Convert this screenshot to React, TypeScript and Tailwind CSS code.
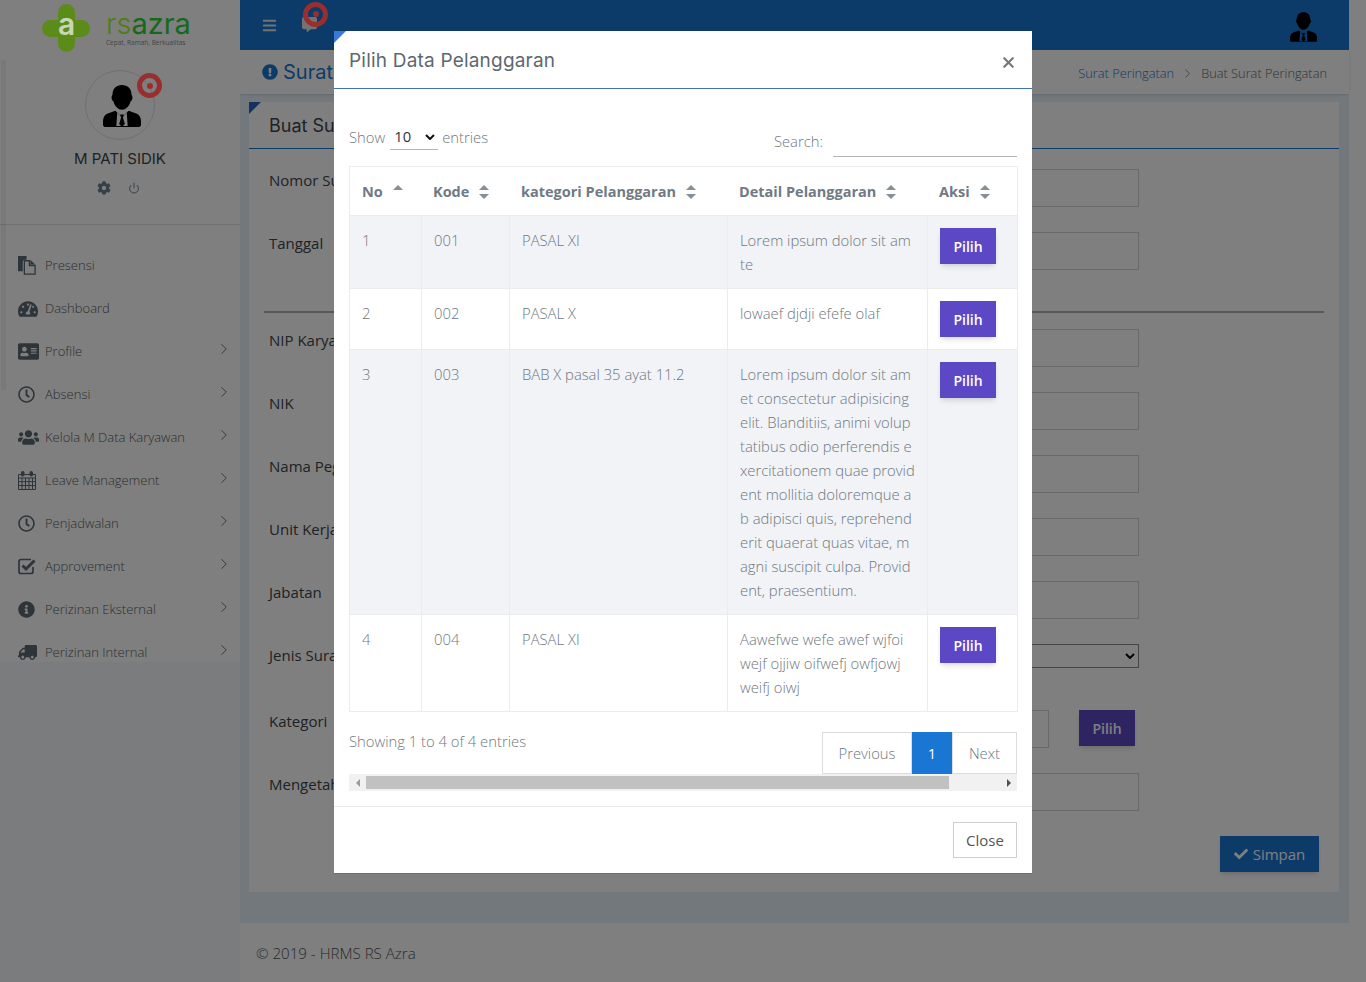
import { ChevronRight, Power, X } from 'lucide-react'
import {
  FaAddressCard,
  FaBars,
  FaCheck,
  FaCog,
  FaCommentAlt,
  FaExclamationCircle,
  FaInfoCircle,
  FaRegClock,
  FaTachometerAlt,
  FaTruck,
  FaUsers,
} from 'react-icons/fa'
import type { ReactNode } from 'react'

const body = { fontFamily: '"Open Sans", sans-serif' }
const heading = { fontFamily: 'Inter, sans-serif' }

function UserTie({ className, bg }: { className: string; bg: string }) {
  return (
    <svg viewBox="0 0 40 44" className={className} fill="currentColor">
      <path d="M20 0c-6 0-10 4-10 10 0 1-1 1-1 3s1 4 2 4c1 5 5 9 9 9s8-4 9-9c1 0 2-2 2-4s-1-2-1-3c0-6-4-10-10-10z" />
      <path d="M13 27l-8 3c-3 1-5 4-5 8v4c0 1 1 2 2 2h36c1 0 2-1 2-2v-4c0-4-2-7-5-8l-8-3-5 5h-4z" />
      <path d="M15 29l5 5 5-5 1 14H14z" fill={bg} />
      <path d="M18 31h4l-1 3 2 7-3 3-3-3 2-7z" />
    </svg>
  )
}

function FilesIcon() {
  return (
    <svg viewBox="0 0 20 20" className="h-[19px] w-[19px]" fill="currentColor">
      <path d="M0 0h9v4H6.5L5 5.5V16H0z" />
      <path d="M6.7 5H12v5h6v9H6.7z" fill="none" stroke="currentColor" strokeWidth="1.4" />
      <path d="M13 4l5 5h-5z" />
    </svg>
  )
}

function CalendarIcon() {
  return (
    <svg viewBox="0 0 18 19" className="h-[19px] w-[18px]" fill="none" stroke="currentColor" strokeWidth="1">
      <path d="M.5 3.5h17v15H.5zM.5 7h17M.5 10.7h17M.5 14.5h17M4 7v11.5M7.5 7v11.5M11 7v11.5M14.5 7v11.5" />
      <rect x="3.5" y="0.5" width="2.5" height="4.5" rx="1" fill="currentColor" />
      <rect x="12" y="0.5" width="2.5" height="4.5" rx="1" fill="currentColor" />
    </svg>
  )
}

function CheckIcon() {
  return (
    <svg viewBox="0 0 18 17" className="h-[17px] w-[18px]" fill="none" stroke="currentColor">
      <path d="M15 9v4.5a2 2 0 0 1-2 2H3a2 2 0 0 1-2-2v-10a2 2 0 0 1 2-2h10" strokeWidth="1.7" />
      <path d="M4.5 7.5L8 11l8.5-8.5" strokeWidth="3" />
    </svg>
  )
}

function Ring({ className }: { className: string }) {
  return (
    <span className={`absolute z-50 flex h-[25px] w-[25px] items-center justify-center rounded-full border-[5px] border-[#982f2e] ${className}`}>
      <span className="h-[6px] w-[6px] rounded-full bg-[#982f2e]" />
    </span>
  )
}

function SortIcon({ only }: { only?: boolean }) {
  return (
    <svg viewBox="0 0 10 14" className="h-[14px] w-[10px]" fill="#868e96">
      <path d="M5 0l5 5H0z" />
      {!only && <path d="M5 14L0 9h10z" />}
    </svg>
  )
}

const menu: { label: string; icon: ReactNode; arrow: boolean }[] = [
  { label: 'Presensi', icon: <FilesIcon />, arrow: false },
  { label: 'Dashboard', icon: <FaTachometerAlt size={20} />, arrow: false },
  { label: 'Profile', icon: <FaAddressCard size={21} />, arrow: true },
  { label: 'Absensi', icon: <FaRegClock size={17} />, arrow: true },
  { label: 'Kelola M Data Karyawan', icon: <FaUsers size={21} />, arrow: true },
  { label: 'Leave Management', icon: <CalendarIcon />, arrow: true },
  { label: 'Penjadwalan', icon: <FaRegClock size={17} />, arrow: true },
  { label: 'Approvement', icon: <CheckIcon />, arrow: true },
  { label: 'Perizinan Eksternal', icon: <FaInfoCircle size={17} />, arrow: true },
  { label: 'Perizinan Internal', icon: <FaTruck size={19} className="-scale-x-100" />, arrow: true },
]

const rows = [
  { no: '1', kode: '001', kategori: 'PASAL XI', detail: ['Lorem ipsum dolor sit am', 'te'], h: 'h-[73px]', striped: true },
  { no: '2', kode: '002', kategori: 'PASAL X', detail: ['lowaef djdji efefe olaf'], h: 'h-[61px]', striped: false },
  {
    no: '3',
    kode: '003',
    kategori: 'BAB X pasal 35 ayat 11.2',
    detail: [
      'Lorem ipsum dolor sit am',
      'et consectetur adipisicing',
      'elit. Blanditiis, animi volup',
      'tatibus odio perferendis e',
      'xercitationem quae provid',
      'ent mollitia doloremque a',
      'b adipisci quis, reprehend',
      'erit quaerat quas vitae, m',
      'agni suscipit culpa. Provid',
      'ent, praesentium.',
    ],
    h: 'h-[265px]',
    striped: true,
  },
  { no: '4', kode: '004', kategori: 'PASAL XI', detail: ['Aawefwe wefe awef wjfoi', 'wejf ojjiw oifwefj owfjowj', 'weifj oiwj'], h: 'h-[97px]', striped: false },
]

function FormRow({ label, className = 'mb-[25px]' }: { label: string; className?: string }) {
  return (
    <div className={`flex ${className}`}>
      <label className="-mt-[1px] w-[150px] text-[15px] leading-[24px] text-[#3d4448]">{label}</label>
      <div className="h-[38px] w-[720px] border border-[#ced4da] bg-white" />
    </div>
  )
}

export default function App() {
  return (
    <div className="relative flex h-[982px] w-[1366px] overflow-hidden bg-white" style={body}>
      {/* Sidebar */}
      <aside className="relative flex w-[240px] shrink-0 flex-col bg-[#f6f9fb]">
        <div className="bg-white">
          <div className="relative z-50 flex h-[60px] items-start pl-[42px] pt-[4px]">
            <svg viewBox="0 0 48 48" className="h-[48px] w-[48px]">
              <rect x="16" y="0" width="17" height="48" rx="8.5" fill="#5b8c1a" />
              <rect x="0" y="16" width="48" height="17" rx="8.5" fill="#5b8c1a" />
            </svg>
            <span className="absolute left-[58px] top-[9px] text-[30px] font-semibold leading-[30px] text-[#c9d6b4]" style={heading}>a</span>
            <div className="ml-[16px] mt-[7px] flex flex-col">
              <div className="flex items-baseline text-[29px] leading-[26px]" style={heading}>
                <span className="font-light text-[#4f7d14]">rs</span>
                <span className="text-[#14691a]">azra</span>
              </div>
              <span className="mt-[2px] whitespace-nowrap text-[6.5px] leading-[7px] text-[#444]">Cepat, Ramah, Berkualitas</span>
            </div>
          </div>
          <div className="flex h-[165px] flex-col items-center border-b border-[#e2e2e2]">
            <div className="relative mt-[10px] flex h-[70px] w-[70px] items-center justify-center rounded-full border border-[#e0e0e0]">
              <UserTie className="ml-[3px] mt-[1px] h-[42px] w-[38px] text-black" bg="#ffffff" />
              <Ring className="left-[51px] top-[2px]" />
            </div>
            <span className="mt-[8px] text-[15px] leading-[22px] text-[#3c4449]" style={heading}>M PATI SIDIK</span>
            <div className="-ml-[3px] mt-[11px] flex items-center gap-[17px] text-[#6c8190]">
              <FaCog size={14} />
              <Power size={12} />
            </div>
          </div>
          <nav className="h-[437px] overflow-hidden pt-[19px]">
            {menu.map((item) => (
              <div key={item.label} className="flex h-[43px] items-center pl-[18px] pr-[7px] text-[13px] font-light text-[#555c61]">
                <span className="flex w-[27px] shrink-0 items-center text-[#5b6a75]">{item.icon}</span>
                <span className="flex-1 whitespace-nowrap">{item.label}</span>
                {item.arrow && <ChevronRight size={18} strokeWidth={1} className="-mt-[5px] text-[#444]" />}
              </div>
            ))}
          </nav>
        </div>
        <div className="absolute left-[1px] top-[60px] h-[330px] w-[5px] bg-black/5" />
      </aside>

      {/* Main */}
      <main className="flex w-[1109px] shrink-0 flex-col bg-[#e5f1f9]">
        <header className="flex h-[50px] shrink-0 items-center justify-between bg-[#1976d2] pl-[22px] pr-[32px]">
          <div className="relative flex items-center gap-[25px] text-[#e7e7e7]">
            <FaBars size={15} />
            <FaCommentAlt size={15} className="-mt-[2px]" />
            <Ring className="left-[41px] -top-[16px]" />
          </div>
          <UserTie className="mt-[3px] h-[30px] w-[27px] text-black" bg="#1976d2" />
        </header>

        <div className="flex h-[44px] shrink-0 items-center justify-between bg-white pl-[22px] pr-[22px] shadow-sm">
          <div className="flex items-center gap-[5px] text-[#1976d2]">
            <FaExclamationCircle size={16} />
            <span className="text-[20px]" style={heading}>Surat Peringatan</span>
          </div>
          <div className="mt-[3px] flex items-center gap-[6px] text-[12.8px] font-light">
            <span className="text-[#1976d2]">Surat Peringatan</span>
            <ChevronRight size={15} strokeWidth={1} className="text-[#555]" />
            <span className="text-[#666]">Buat Surat Peringatan</span>
          </div>
        </div>

        <section className="relative mx-[9px] mt-[8px] flex h-[790px] w-[1090px] shrink-0 flex-col bg-white">
          <div className="absolute left-0 top-0 h-0 w-0 border-r-[12px] border-t-[12px] border-r-transparent border-t-[#2b62c4]" />
          <div className="flex h-[47px] shrink-0 items-center border-b border-[#1976d2] pl-[20px] text-[18px] text-[#3e4549]" style={heading}>
            Buat Surat Peringatan
          </div>
          <div className="px-[20px] pt-[20px]">
            <FormRow label="Nomor Surat" />
            <FormRow label="Tanggal" className="mb-[41px]" />
            <div className="-mx-[5px] mb-[16px] h-[2px] bg-[#b0b0b0]" />
            <FormRow label="NIP Karyawan" />
            <FormRow label="NIK" />
            <FormRow label="Nama Pegawai" />
            <FormRow label="Unit Kerja" />
            <FormRow label="Jabatan" />
            <div className="mb-[42px] flex">
              <label className="-mt-[1px] w-[150px] text-[15px] leading-[24px] text-[#3d4448]">Jenis Surat</label>
              <div className="flex h-[24px] w-[720px] items-center justify-end border border-[#8a8a8a] bg-white pr-[3px]">
                <svg viewBox="0 0 10 6" className="h-[6px] w-[10px]" fill="none" stroke="#000" strokeWidth="2">
                  <path d="M1 1l4 4 4-4" />
                </svg>
              </div>
            </div>
            <div className="mb-[25px] flex">
              <label className="-mt-[1px] w-[150px] text-[15px] leading-[24px] text-[#3d4448]">Kategori</label>
              <div className="h-[38px] w-[630px] border border-[#ced4da] bg-white" />
              <button className="ml-[30px] h-[36px] w-[56px] bg-[#5c48c4] text-[14px] font-semibold text-white shadow-md">Pilih</button>
            </div>
            <FormRow label="Mengetahui" />
            <div className="flex w-[1050px] justify-end">
              <button className="flex h-[36px] w-[99px] items-center justify-center gap-[5px] bg-[#1976d2] text-[15px] text-white shadow-md">
                <FaCheck size={14} />
                Simpan
              </button>
            </div>
          </div>
        </section>

        <div className="h-[31px] shrink-0" />
        <footer className="flex flex-1 items-center bg-white pl-[16px] pt-[2px] text-[15.1px] font-light text-[#555]">© 2019 - HRMS RS Azra</footer>
      </main>

      {/* Backdrop */}
      <div className="absolute inset-0 z-40 bg-black/50" />

      {/* Modal */}
      <div className="absolute left-[334px] top-[31px] z-50 flex h-[843px] w-[698px] flex-col border-b border-[#4472c4] bg-white text-[#6f7780]">
        <div className="absolute left-0 top-0 h-0 w-0 border-r-[12px] border-t-[12px] border-r-transparent border-t-[#3b78d8]" />
        <div className="flex h-[58px] shrink-0 items-center justify-between border-b border-[#3f72b8] pl-[15px] pr-[15px]">
          <span className="mt-[3px] text-[19px] tracking-[0.2px] text-[#5c6870]" style={heading}>Pilih Data Pelanggaran</span>
          <X size={17} strokeWidth={3} className="mt-[6px] text-[#777]" />
        </div>

        <div className="flex flex-col px-[15px]">
          <div className="flex h-[77px] items-start justify-between text-[14.8px] font-light">
            <div className="mt-[35px] flex items-center">
              <span>Show</span>
              <span className="ml-[5px] mr-[4px] flex h-[26px] w-[48px] items-center justify-between border-b border-[#b5b5b5] pl-[4px] pr-[3px] font-normal text-[#333]">
                10
                <svg viewBox="0 0 10 6" className="h-[6px] w-[10px]" fill="none" stroke="#111" strokeWidth="2">
                  <path d="M1 1l4 4 4-4" />
                </svg>
              </span>
              <span>entries</span>
            </div>
            <div className="mt-[36px] flex items-start">
              <span className="mr-[10px] mt-[5px] leading-[22px]">Search:</span>
              <span className="h-[32px] w-[184px] border-b border-[#b5b5b5]" />
            </div>
          </div>

          <table className="w-[668px] table-fixed border border-[#ececec] text-[14.8px] font-light">
            <colgroup>
              <col className="w-[72px]" />
              <col className="w-[88px]" />
              <col className="w-[218px]" />
              <col className="w-[200px]" />
              <col className="w-[90px]" />
            </colgroup>
            <thead>
              <tr className="h-[49px] text-left text-[#6f7a84]">
                {['No', 'Kode', 'kategori Pelanggaran', 'Detail Pelanggaran', 'Aksi'].map((h, i) => (
                  <th key={h} className={`${i === 0 ? 'pl-[12px]' : 'pl-[11.5px]'} pt-[2px] text-[14.5px] font-bold`}>
                    <span className="flex items-center gap-[10px] whitespace-nowrap">
                      {h}
                      <SortIcon only={i === 0} />
                    </span>
                  </th>
                ))}
              </tr>
            </thead>
            <tbody>
              {rows.map((r) => (
                <tr key={r.no} className={`${r.h} ${r.striped ? 'bg-[#f1f3f7]' : 'bg-white'}`}>
                  <td className="border-r border-t border-[#ececec] pl-[12px] pt-[12px] align-top leading-[24px]">{r.no}</td>
                  <td className="border-r border-t border-[#ececec] pl-[12px] pt-[12px] align-top leading-[24px]">{r.kode}</td>
                  <td className="border-r border-t border-[#ececec] pl-[12px] pt-[12px] align-top leading-[24px]">{r.kategori}</td>
                  <td className="border-r border-t border-[#ececec] pl-[12px] pt-[12px] align-top leading-[24px]">
                    {r.detail.map((line) => (
                      <div key={line} className="whitespace-nowrap">{line}</div>
                    ))}
                  </td>
                  <td className="border-t border-[#ececec] pl-[12px] pt-[12px] align-top">
                    <button className="h-[36px] w-[56px] bg-[#5c48c4] text-[14px] font-semibold text-white shadow-md">Pilih</button>
                  </td>
                </tr>
              ))}
            </tbody>
          </table>

          <div className="mt-[20px] flex h-[42px] items-start justify-between">
            <span className="-mt-[3px] text-[14.8px] font-light leading-[24px]">Showing 1 to 4 of 4 entries</span>
            <div className="flex h-[42px] text-[14.8px] font-light">
              <span className="flex w-[90px] items-center justify-center border border-[#dcdcdc]">Previous</span>
              <span className="flex w-[40px] items-center justify-center bg-[#1976d2] font-normal text-white">1</span>
              <span className="flex w-[65px] items-center justify-center border border-[#dcdcdc]">Next</span>
            </div>
          </div>

          <div className="flex h-[17px] w-[668px] items-center bg-[#f1f1f1]">
            <span className="flex w-[17px] justify-center">
              <svg viewBox="0 0 4 8" className="h-[8px] w-[4px]" fill="#9a9a9a"><path d="M4 0v8L0 4z" /></svg>
            </span>
            <span className="h-[13px] w-[583px] bg-[#c1c1c1]" />
            <span className="flex flex-1 justify-end pr-[6px]">
              <svg viewBox="0 0 4 8" className="h-[8px] w-[4px]" fill="#505050"><path d="M0 0v8l4-4z" /></svg>
            </span>
          </div>
        </div>

        <div className="mt-[15px] flex flex-1 items-start justify-end border-t border-[#e9e9e9] pr-[15px] pt-[15px]">
          <button className="h-[36px] w-[64px] border border-[#cfcfcf] text-[15px] text-[#555]">Close</button>
        </div>
      </div>
    </div>
  )
}
